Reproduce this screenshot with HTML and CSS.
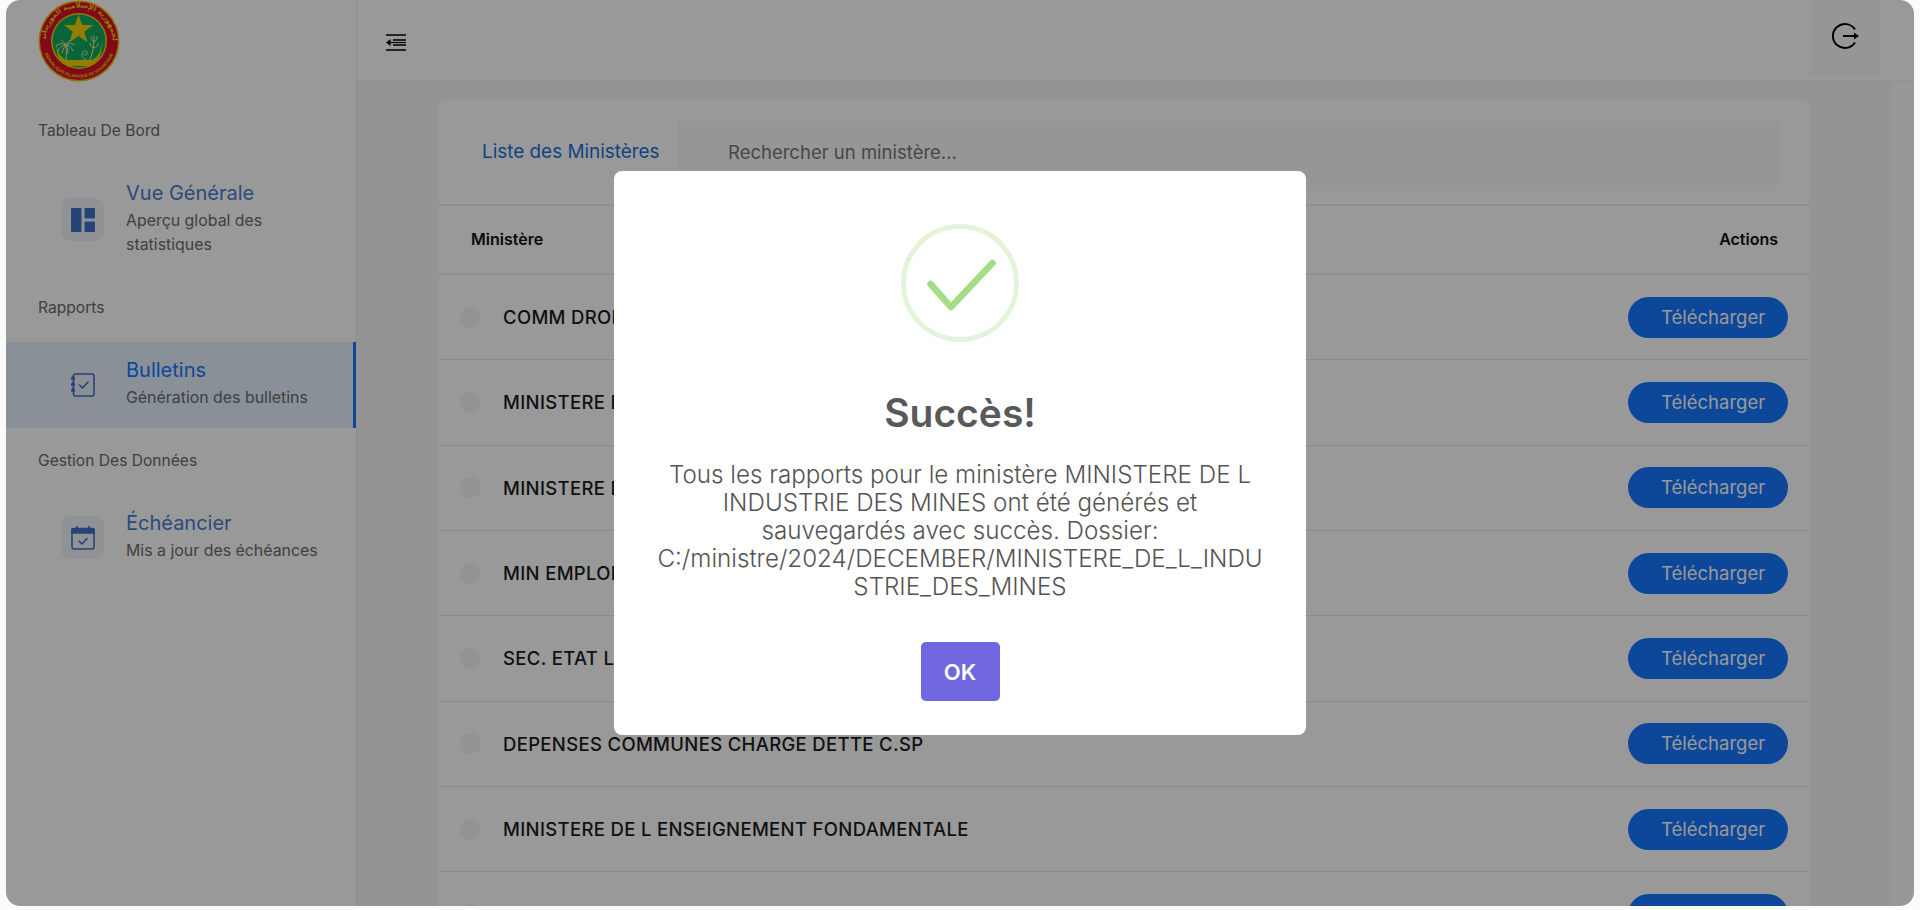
FILE: index.html
```html
<!DOCTYPE html>
<html lang="fr">
<head>
<meta charset="utf-8">
<title>Bulletins</title>
<link rel="stylesheet" href="styles.css">
</head>
<body>
<div class="window">
  <aside class="sidebar">
    <div class="logo">
      <svg viewBox="0 0 82 82" width="82" height="82">
        <defs>
          <path id="arcTop" d="M7.5 41a33.5 33.5 0 0 1 67 0"/>
          <path id="arcBottom" d="M4.5 41a36.5 36.5 0 0 0 73 0"/>
        </defs>
        <circle cx="41" cy="41" r="40.5" fill="#f2c200"/>
        <circle cx="41" cy="41" r="39" fill="#d8102c"/>
        <circle cx="41" cy="41" r="28" fill="#f2d000"/>
        <circle cx="41" cy="41" r="26.5" fill="#0ea860"/>
        <text class="logo-ar" font-size="7.2" fill="#f5d000"><textPath href="#arcTop" startOffset="50%" text-anchor="middle">الجمهورية الإسلامية الموريتانية</textPath></text>
        <text class="logo-fr" font-size="4.3" fill="#f5d000"><textPath href="#arcBottom" startOffset="50%" text-anchor="middle">REPUBLIQUE ISLAMIQUE DE MAURITANIE</textPath></text>
        <path d="M40.5 14.5l3.6 10.4 11 .2-8.8 6.6 3.2 10.5-9-6.3-9 6.3 3.2-10.5-8.8-6.6 11-.2z" fill="#f5d000"/>
        <path d="M19 41c-2 12 2 21 11 25h22c9-4 13-13 11-25 1 11-4 18-12 20l-3 3H34l-3-3c-8-2-13-9-12-20z" fill="#f5d000"/>
        <path d="M28 60h26l-3 6H31z" fill="#f5d000"/>
        <g fill="none" stroke="#f5e8a0" stroke-width="1" stroke-linecap="round">
          <path d="M28 60c.5-6 .5-10 0-15M28 45c-3-2-7-2-10 1M28 45c-3 0-6 2-8 6M28 45c-1 1-3 4-4 8M28 45c3-2 6-2 9 0M28 45c3 0 5 2 7 6M28 45c1 1 2 4 2 8M28 45c-1-2-3-4-5-5M28 45c1-2 3-4 5-5"/>
          <path d="M52 60c3-7 4-16 4-24M56 42c-2-1-3-3-3-5M56 42c2-1 3-3 3-5M56 48c-3-1-4-3-4-5M56 48c3-1 4-3 4-5M48 60c-4-2-5-5-3-8 2-2 5-1 4 2-1 2-3 1-3 0"/>
        </g>
      </svg>
    </div>

    <div class="section-label first">Tableau De Bord</div>
    <div class="item">
      <span class="item-icon">
        <svg viewBox="0 0 24 24" width="24" height="24"><rect x="0" y="0" width="10.5" height="24" rx="1"/><rect x="13.5" y="0" width="10.5" height="10.5" rx="1"/><rect x="13.5" y="13.5" width="10.5" height="10.5" rx="1"/></svg>
      </span>
      <div class="item-text">
        <div class="item-title">Vue Générale</div>
        <div class="item-sub">Aperçu global des statistiques</div>
      </div>
    </div>

    <div class="section-label">Rapports</div>
    <div class="item active">
      <span class="item-icon">
        <svg class="line" viewBox="0 0 24 24" width="24" height="24"><rect x="2.500" y="1" width="20.500" height="22" rx="2"/><path d="M8.500 12l3 3 5.500-6"/><path d="M.5 6h3M.5 12h3M.5 18h3M1 5l1-1.500 1 1.500M1 11l1-1.500 1 1.500M1 17l1-1.500 1 1.500"/></svg>
      </span>
      <div class="item-text">
        <div class="item-title">Bulletins</div>
        <div class="item-sub">Génération des bulletins</div>
      </div>
    </div>

    <div class="section-label tight">Gestion Des Données</div>
    <div class="item">
      <span class="item-icon">
        <svg class="line" viewBox="0 0 24 24" width="24" height="24"><rect x="1" y="2.500" width="22" height="20.500" rx="2"/><path class="fill" d="M1 3h22v4H1z"/><path d="M6 .5v3M18 .5v3"/><path d="M8 15l3 3 5-5.500"/></svg>
      </span>
      <div class="item-text">
        <div class="item-title">Échéancier</div>
        <div class="item-sub">Mis a jour des échéances</div>
      </div>
    </div>
  </aside>

  <div class="content">
    <header class="topbar">
      <button class="menu-btn" aria-label="Menu">
        <svg viewBox="0 0 20 17" width="20" height="17"><path d="M0 1h20M7 6h13M7 11h13M0 16h20" fill="none" stroke="#000" stroke-width="1.600"/><path d="M0 8.500l4.500-3.500v7z" fill="#000"/><path d="M4 8.500h16" stroke="#000" stroke-width="1.200"/></svg>
      </button>
      <button class="logout-btn" aria-label="Déconnexion">
        <svg viewBox="0 0 28 28" width="28" height="28"><path d="M24 7.500A12 12 0 1 0 24 20.500" fill="none" stroke="#000" stroke-width="2"/><path d="M12 14h13" fill="none" stroke="#000" stroke-width="2"/><path d="M28 14l-5-3.500v7z" fill="#000"/></svg>
      </button>
    </header>
    <div class="body-row">
      <main class="main">
        <section class="card">
          <div class="card-head">
            <div class="tab">Liste des Ministères</div>
            <div class="search">Rechercher un ministère...</div>
          </div>
          <div class="thead"><span>Ministère</span><span>Actions</span></div>
          <div class="row"><span class="dot"></span><span class="name">COMM DROITS DE L HOMME</span><button class="dl">Télécharger</button></div>
          <div class="row"><span class="dot"></span><span class="name">MINISTERE DE LA JUSTICE</span><button class="dl">Télécharger</button></div>
          <div class="row"><span class="dot"></span><span class="name">MINISTERE DE L INDUSTRIE DES MINES</span><button class="dl">Télécharger</button></div>
          <div class="row"><span class="dot"></span><span class="name">MIN EMPLOI ET FORMATION</span><button class="dl">Télécharger</button></div>
          <div class="row"><span class="dot"></span><span class="name">SEC. ETAT LA SOLIDARITE</span><button class="dl">Télécharger</button></div>
          <div class="row"><span class="dot"></span><span class="name">DEPENSES COMMUNES CHARGE DETTE C.SP</span><button class="dl">Télécharger</button></div>
          <div class="row"><span class="dot"></span><span class="name">MINISTERE DE L ENSEIGNEMENT FONDAMENTALE</span><button class="dl">Télécharger</button></div>
          <div class="row"><span class="dot"></span><span class="name">MINISTERE DE LA SANTE</span><button class="dl">Télécharger</button></div>
        </section>
      </main>
      <div class="scroll-track"></div>
    </div>
  </div>

  <div class="overlay">
    <div class="modal">
      <svg class="success" viewBox="0 0 118 118" width="118" height="118">
        <circle cx="59" cy="59" r="56.500" fill="none" stroke="#e4f4da" stroke-width="5"/>
        <path d="M6.500 33.500l1.500 2.500M83 111l1.500-1" fill="none" stroke="#a5dc86" stroke-width=".6"/>
        <path d="M29.500 60L50 83l41.500-44" fill="none" stroke="#a5dc86" stroke-width="6.500" stroke-linecap="round" stroke-linejoin="round"/>
      </svg>
      <h2 class="modal-title">Succès!</h2>
      <p class="modal-text">Tous les rapports pour le ministère MINISTERE DE L<br>INDUSTRIE DES MINES ont été générés et<br>sauvegardés avec succès. Dossier:<br>C:/ministre/2024/DECEMBER/MINISTERE_DE_L_INDU<br>STRIE_DES_MINES</p>
      <button class="ok">OK</button>
    </div>
  </div>
</div>
</body>
</html>
```
FILE: styles.css
```css
* { box-sizing: border-box; }
html, body { margin: 0; height: 100%; }
body {
  background: #fbfbfb;
  font-family: Inter, "Noto Sans", "Liberation Sans", sans-serif;
  height: 910px;
  padding: 0 6px 4px;
  overflow: hidden;
}
button { font-family: inherit; border: 0; padding: 0; background: none; }

.window {
  position: relative;
  display: flex;
  height: 906px;
  background: #fff;
  border-radius: 14px;
  overflow: hidden;
}

.sidebar {
  flex: 0 0 351px;
  background: #fff;
  border-right: 1px solid #ececec;
  color: #444;
}
.logo { height: 81px; padding-left: 32px; }
.logo svg { display: block; }
.logo-ar { font-family: "DejaVu Sans", sans-serif; font-weight: 700; }
.logo-fr { font-family: "Liberation Sans", sans-serif; font-weight: 700; }

.section-label {
  font-size: 15.600px;
  font-weight: 400;
  line-height: 24px;
  color: #6a6a6a;
  padding: 22px 0 22px 32px;
  height: 68px;
}
.section-label.first { height: 85px; padding-top: 38px; padding-bottom: 23px; }
.section-label.tight { padding-top: 21px; padding-bottom: 23px; }

.item {
  display: flex;
  align-items: center;
  padding: 11px 16px 17px 55px;
}
.item-icon {
  flex: 0 0 43px;
  height: 43px;
  margin: 5px 22px 0 0;
  border-radius: 9px;
  background: #f0f4fa;
  display: flex;
  align-items: center;
  justify-content: center;
}
.item-icon svg { fill: #3f72c4; }
.item-icon svg.line { fill: none; stroke: #3f72c4; stroke-width: 1.600; stroke-linecap: round; stroke-linejoin: round; }
.item-icon svg.line .fill { fill: #3f72c4; }
.item-title { font-size: 20px; line-height: 32px; color: #4a7bd0; }
.item-sub { font-size: 15.900px; line-height: 24px; color: #6c6c6c; width: 195px; }

.item.active {
  height: 86px;
  background: #e4f0fe;
  border-right: 3px solid #1677ff;
  padding-right: 13px;
}
.item.active .item-title { color: #1677ff; }
.item.active .item-icon { background: #e9f0fb; }

.content { flex: 1; display: flex; flex-direction: column; min-width: 0; }
.topbar {
  flex: 0 0 82px;
  display: flex;
  align-items: flex-start;
  justify-content: space-between;
  background: #fff;
  border-bottom: 1px solid #f0f0f0;
  padding: 0 34px 0 29px;
}
.menu-btn { margin-top: 34px; width: 20px; height: 17px; }
.menu-btn svg, .logout-btn svg { display: block; }
.logout-btn {
  width: 70px;
  height: 77px;
  background: #fafafa;
  display: flex;
  align-items: flex-start;
  justify-content: center;
  padding-top: 22px;
}

.body-row { flex: 1; display: flex; min-height: 0; }
.main { flex: 1; background: #f7f7f7; padding: 18px 81px 0; overflow: hidden; }
.scroll-track { flex: 0 0 23px; background: #fdfdfd; }

.card { background: #fff; border-radius: 8px 8px 0 0; }
.card-head {
  display: flex;
  height: 106px;
  padding-top: 21px;
  border-bottom: 2px solid #ededed;
}
.tab {
  flex: 0 0 242px;
  padding: 16px 0 0 44px;
  font-size: 18.900px;
  line-height: 30px;
  color: #1e6fd9;
  border-right: 1px solid #f4f4f4;
  height: 61px;
  white-space: nowrap;
}
.search {
  flex: 1;
  height: 61px;
  margin-right: 32px;
  padding: 16px 0 0 48px;
  font-size: 18.500px;
  line-height: 30px;
  color: #777;
  background: #fbfbfb;
  box-shadow: 2px 3px 6px rgba(0,0,0,.035);
}
.thead {
  display: flex;
  justify-content: space-between;
  height: 69px;
  padding: 0 32px 2px 33px;
  align-items: center;
  font-size: 16px;
  font-weight: 600;
  color: #111;
  border-bottom: 2px solid #ededed;
}
.row {
  display: flex;
  align-items: center;
  height: 85.330px;
  padding: 0 22px 0 22px;
  border-bottom: 1px solid #e8e8ec;
}
.dot { flex: 0 0 21px; height: 21px; border-radius: 50%; background: #f5f5f5; margin-right: 22px; }
.name { flex: 1; font-size: 18.500px; letter-spacing: .33px; font-weight: 500; color: #1c1c1c; }
.dl {
  width: 160px;
  height: 41px;
  border-radius: 21px;
  background: #1677ff;
  color: #fff;
  font-size: 18.500px;
  line-height: 41px;
  text-align: left;
  padding-left: 33px;
}

.overlay {
  position: absolute;
  inset: 0;
  background: rgba(0,0,0,.4);
}
.modal {
  position: absolute;
  left: 608px;
  top: 171px;
  width: 692px;
  height: 564px;
  background: #fff;
  border-radius: 8px;
  display: flex;
  flex-direction: column;
  align-items: center;
  padding-top: 53px;
}
.success { display: block; }
.modal-title {
  margin: 47px 0 0;
  font-size: 39px;
  line-height: 48px;
  font-weight: 600;
  color: #595959;
}
.modal-text {
  margin: 24px 0 0;
  font-size: 24.200px;
  line-height: 28px;
  font-weight: 300;
  color: #545454;
  text-align: center;
  white-space: nowrap;
}
.ok {
  margin-top: 41px;
  width: 79px;
  height: 59px;
  background: #7066e0;
  color: #fff;
  font-size: 22px;
  font-weight: 600;
  border-radius: 5px;
}
```
